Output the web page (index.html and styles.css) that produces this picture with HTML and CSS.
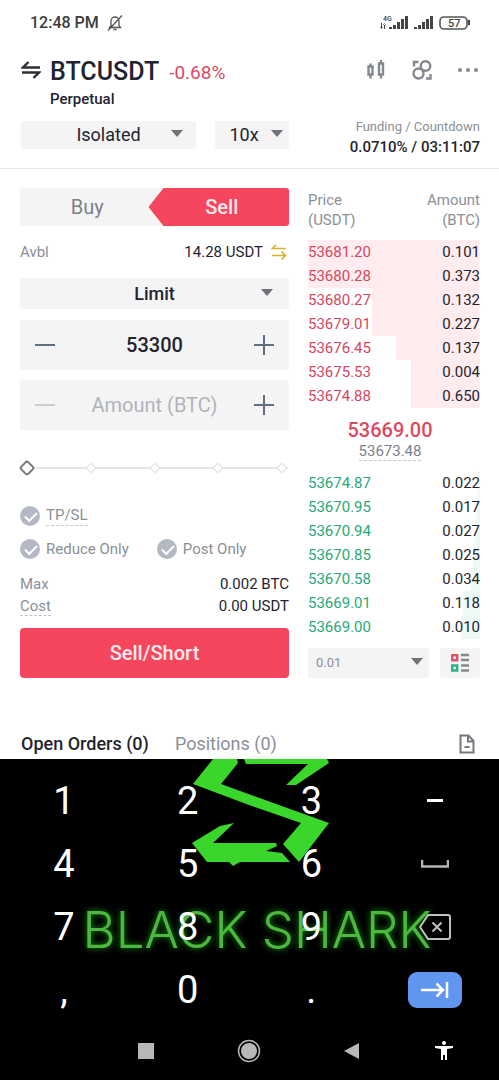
FILE: index.html
```
<!DOCTYPE html>
<html lang="en">
    <head>
        <meta charset="utf-8">
        <meta name="viewport" content="width=device-width, initial-scale=1">
        <title>BTCUSDT Perpetual</title>
        <link rel="stylesheet" href="styles.css">
    </head>

    <body>
        <div class="statusBar">
            <span class="clock">12:48 PM</span>
            <svg width="16" height="18" viewBox="0 0 16 18" fill="none" stroke="#555" stroke-width="1.3">
                <path d="M2.5 13.5h11L12 11.500V7a4 4 0 0 0-8 0v4.500zM6.500 15.500h3M15 1.500L1 16.500"/>
            </svg>
            <svg class="signals" width="90" height="18" viewBox="0 0 90 18">
                <g fill="#444">
                    <text x="3" y="7" font-size="7" font-weight="500">4G</text>
                    <path d="M1 9h1v6h-1zM0 13h3l-1.500 2zM4 9h1v6h-1zM3 11h3l-1.500-2z"/>
                    <path d="M9 13h3v2h-3zM13 11h3v4h-3zM17 8h3v7h-3zM21 5h3v10h-3zM25 2h3v13h-3z"/>
                    <path d="M34 13h3v2h-3zM38 11h3v4h-3zM42 8h3v7h-3zM46 5h3v10h-3zM50 2h3v13h-3z"/>
                    <path d="M88 6h2v5h-2z"/>
                    <text x="68" y="13" font-size="11" font-weight="500">57</text>
                </g>
                <rect x="60" y="3" width="27" height="12" rx="4" fill="none" stroke="#555" stroke-width="1.6"/>
            </svg>
        </div>

        <header>
            <div class="pair">
                <svg width="20" height="18" viewBox="0 0 20 18" fill="none" stroke="#2b2f38" stroke-width="2.400">
                    <path d="M19 6.500H2L7.500 1M1 11.500H18L12.500 17"/>
                </svg>
                <div class="pairName">
                    <h1>BTCUSDT</h1>
                    <span class="change">-0.68%</span>
                    <p>Perpetual</p>
                </div>
            </div>
            <div class="headerIcons">
                <button aria-label="Chart">
                    <svg width="20" height="20" viewBox="0 0 20 20" fill="none" stroke="#85898f" stroke-width="2.4">
                        <path d="M2.500 6.500h4v8h-4zM4.500 3.500v3M4.500 14.500v4M13 3.500h4v11h-4zM15 0v3.500M15 14.500v4"/>
                    </svg>
                </button>
                <button aria-label="Contract info">
                    <svg width="20" height="20" viewBox="0 0 20 20" fill="none" stroke="#85898f" stroke-width="2.400">
                        <circle cx="13.500" cy="6" r="4.800"/>
                        <circle cx="6.500" cy="13.500" r="5"/>
                        <path d="M2 6.500V2h4.500M18.500 14v4.500h-4.500"/>
                    </svg>
                </button>
                <button aria-label="More">
                    <svg width="20" height="20" viewBox="0 0 20 20" fill="#85898f">
                        <circle cx="2" cy="10" r="2"/><circle cx="10" cy="10" r="2"/><circle cx="18" cy="10" r="2"/>
                    </svg>
                </button>
            </div>
        </header>

        <div class="marginRow">
            <div class="selectBox marginMode">
                <select aria-label="Margin mode"><option>Isolated</option></select>
            </div>
            <div class="selectBox leverage">
                <select aria-label="Leverage"><option>10x</option></select>
            </div>
            <div class="funding">
                <span>Funding / Countdown</span>
                <strong>0.0710% / 03:11:07</strong>
            </div>
        </div>

        <main>
            <form class="orderForm" onsubmit="return false;">
                <div class="sideToggle">
                    <button type="button">Buy</button>
                    <button type="button" class="active">Sell</button>
                </div>

                <div class="available">
                    <span class="muted">Avbl</span>
                    <span>14.28 USDT</span>
                    <svg width="16" height="16" viewBox="0 0 16 16" fill="none" stroke="#d9b52c" stroke-width="1.700">
                        <path d="M15 4.500H1.500L5 1M1 11.500h13.500M10.500 7.500l4 4-4 4"/>
                    </svg>
                </div>

                <div class="selectBox orderType">
                    <select aria-label="Order type"><option>Limit</option></select>
                </div>

                <div class="stepper">
                    <button type="button" class="minus" aria-label="Decrease price"></button>
                    <input type="text" aria-label="Price" value="53300">
                    <button type="button" class="plus" aria-label="Increase price"></button>
                </div>
                <div class="stepper">
                    <button type="button" class="minus" aria-label="Decrease amount" disabled></button>
                    <input type="text" aria-label="Amount" placeholder="Amount (BTC)">
                    <button type="button" class="plus" aria-label="Increase amount"></button>
                </div>

                <div class="percent">
                    <div class="ticks"><i></i><i></i><i></i><i></i><i></i></div>
                    <input type="range" min="0" max="100" value="0" aria-label="Percent of balance">
                </div>

                <div class="options">
                    <label><input type="checkbox" checked><span class="hint">TP/SL</span></label>
                </div>
                <div class="options">
                    <label><input type="checkbox" checked>Reduce Only</label>
                    <label><input type="checkbox" checked>Post Only</label>
                </div>

                <dl>
                    <div><dt>Max</dt><dd>0.002 BTC</dd></div>
                    <div><dt><span class="hint">Cost</span></dt><dd>0.00 USDT</dd></div>
                </dl>

                <button type="submit" class="submit">Sell/Short</button>
            </form>

            <section class="book">
                <table class="asks">
                    <thead>
                        <tr><th>Price<br>(USDT)</th><th>Amount<br>(BTC)</th></tr>
                    </thead>
                    <tbody>
                        <tr style="--depth: 100%"><td>53681.20</td><td>0.101</td></tr>
                        <tr style="--depth: 100%"><td>53680.28</td><td>0.373</td></tr>
                        <tr style="--depth: 63%"><td>53680.27</td><td>0.132</td></tr>
                        <tr style="--depth: 63%"><td>53679.01</td><td>0.227</td></tr>
                        <tr style="--depth: 49%"><td>53676.45</td><td>0.137</td></tr>
                        <tr style="--depth: 40%"><td>53675.53</td><td>0.004</td></tr>
                        <tr style="--depth: 40%"><td>53674.88</td><td>0.650</td></tr>
                    </tbody>
                </table>

                <div class="lastPrice">
                    <strong>53669.00</strong>
                    <span class="hint">53673.48</span>
                </div>

                <table class="bids">
                    <tbody>
                        <tr style="--depth: 1%"><td>53674.87</td><td>0.022</td></tr>
                        <tr style="--depth: 2%"><td>53670.95</td><td>0.017</td></tr>
                        <tr style="--depth: 3%"><td>53670.94</td><td>0.027</td></tr>
                        <tr style="--depth: 4%"><td>53670.85</td><td>0.025</td></tr>
                        <tr style="--depth: 5%"><td>53670.58</td><td>0.034</td></tr>
                        <tr style="--depth: 10%"><td>53669.01</td><td>0.118</td></tr>
                        <tr style="--depth: 11%"><td>53669.00</td><td>0.010</td></tr>
                    </tbody>
                </table>

                <div class="bookFooter">
                    <div class="selectBox precision">
                        <select aria-label="Price precision"><option>0.01</option></select>
                    </div>
                    <button aria-label="Book layout">
                        <svg width="20" height="20" viewBox="0 0 20 20" fill="none" stroke-width="2.400">
                            <path stroke="#e4526a" d="M2.200 2.200h5v5h-5z"/>
                            <path stroke="#2fb380" d="M2.200 12.500h5v5h-5z"/>
                            <path stroke="#85898f" d="M11 2h8M11 7h8M11 12.500h8M11 17.500h8"/>
                        </svg>
                    </button>
                </div>
            </section>
        </main>

        <nav class="tabs">
            <a href="#orders" class="current">Open Orders (0)</a>
            <a href="#positions">Positions (0)</a>
            <button aria-label="Order history">
                <svg width="16" height="20" viewBox="0 0 16 20" fill="none" stroke="#74787f" stroke-width="2">
                    <path d="M1.500 1.500h8l5 5.500v11.500h-13zM9 1.500v6h5.500M5.500 13h5"/>
                </svg>
            </button>
        </nav>

        <div class="keyboard">
            <svg class="wallpaper" viewBox="0 0 499 321" aria-hidden="true">
                <g fill="#3bd62c">
                    <path d="M213 0H237L238 4L221 25L329 64L299 103L283 85L301 64L249 46L193 25z"/>
                    <path d="M244 0H327L329 4L296 26H286L308 5H246z"/>
                    <path d="M234 64L213 84H276L277 87L266 92L282 94L290 103H240L233 107L229 103H207L192 84L220 67z"/>
                </g>
                <text class="brand" x="257" y="189" text-anchor="middle">BLACK SHARK</text>
            </svg>
            <div class="keys">
                <button>1</button>
                <button>2</button>
                <button>3</button>
                <button aria-label="Minus">
                    <svg width="16" height="4"><path fill="#fff" d="M0 0h16v3h-16z"/></svg>
                </button>
                <button>4</button>
                <button>5</button>
                <button>6</button>
                <button aria-label="Space">
                    <svg width="28" height="8" fill="none" stroke="#b5b5b5" stroke-width="2.500"><path d="M1 0v6.500h26V0"/></svg>
                </button>
                <button>7</button>
                <button>8</button>
                <button>9</button>
                <button aria-label="Backspace">
                    <svg width="32" height="26" viewBox="0 0 32 26" fill="none" stroke="#c0c0c0" stroke-width="2">
                        <path d="M9 1h20q2 0 2 2v20q0 2-2 2H9L1 13zM13.500 8.500l9 9M22.500 8.500l-9 9"/>
                    </svg>
                </button>
                <button>,</button>
                <button>0</button>
                <button>.</button>
                <button class="next" aria-label="Next">
                    <span>
                        <svg width="28" height="16" viewBox="0 0 28 16" fill="none" stroke="#fff" stroke-width="2.500">
                            <path d="M0 8h22M15.500 1.500L22 8l-6.500 6.500M26 0v16"/>
                        </svg>
                    </span>
                </button>
            </div>
            <div class="systemNav">
                <button aria-label="Recents">
                    <svg width="16" height="16"><path fill="#b8b8b8" d="M0 0h16v16h-16z"/></svg>
                </button>
                <button aria-label="Home">
                    <svg width="24" height="24">
                        <circle cx="12" cy="12" r="10.500" fill="none" stroke="#b8b8b8" stroke-width="1.500"/>
                        <circle cx="12" cy="12" r="8" fill="#b8b8b8"/>
                    </svg>
                </button>
                <button aria-label="Back">
                    <svg width="16" height="18"><path fill="#b8b8b8" d="M15 1v16L0 9z"/></svg>
                </button>
                <button aria-label="Accessibility">
                    <svg width="18" height="20" fill="#fff">
                        <circle cx="9" cy="2" r="2"/>
                        <path d="M0 5h18v2l-6 1v11h-2v-5h-2v5h-2v-11l-6-1z"/>
                    </svg>
                </button>
            </div>
        </div>
    </body>
</html>
```
FILE: styles.css
```
* {
    box-sizing: border-box;
}

body {
    margin: 0;
    font-family: Roboto, "Liberation Sans", sans-serif;
    font-size: 15px;
    line-height: 20px;
    color: #1f2430;
    background-color: #fff;
}

button,
input,
select {
    margin: 0;
    padding: 0;
    border: 0;
    font: inherit;
    color: inherit;
    background: none;
}

button {
    cursor: pointer;
}

svg {
    display: block;
}

h1,
p,
dl,
dd {
    margin: 0;
}

.muted {
    color: #8b8f98;
}

.hint {
    border-bottom: 1px dashed #c4c7cc;
}

.statusBar {
    display: flex;
    align-items: center;
    gap: 8px;
    height: 46px;
    padding: 0 29px 0 30px;
    color: #3c3c3c;
}

.clock {
    font-size: 16px;
    font-weight: 500;
}

.signals {
    margin-left: auto;
}

header {
    display: flex;
    justify-content: space-between;
    padding: 12px 21px 12px 21px;
}

.pair {
    display: flex;
    gap: 9px;
}

.pair > svg {
    margin-top: 3px;
}

.pairName {
    display: grid;
    grid-template-columns: auto auto;
    column-gap: 10px;
    row-gap: 4px;
}

h1 {
    font-size: 25px;
    font-weight: 500;
    line-height: 27px;
}

.change {
    padding-top: 3px;
    font-size: 19px;
    line-height: 24px;
    color: #dc4a62;
}

.pairName p {
    font-weight: 500;
}

.headerIcons {
    display: flex;
    align-items: flex-start;
    gap: 26px;
    padding-top: 2px;
}

.marginRow {
    display: flex;
    align-items: flex-end;
    padding: 0 19px 19px 21px;
    border-bottom: 1px solid #e8e8ea;
}

.selectBox {
    position: relative;
    border-radius: 3px;
    background-color: #f4f4f5;
}

.selectBox select {
    display: block;
    width: 100%;
    height: 100%;
    appearance: none;
    text-align: center;
    text-align-last: center;
}

/* drop-down arrow */
.selectBox::after {
    content: '';
    position: absolute;
    top: 50%;
    right: 16px;
    margin-top: -5px;
    border: 6px solid transparent;
    border-top: 7px solid #6f7379;
    border-bottom: 0;
    pointer-events: none;
}

.marginMode,
.leverage {
    height: 28px;
    font-size: 18px;
}

.marginMode {
    width: 175px;
    margin-right: 19px;
}

.marginMode::after {
    right: 13px;
}

.leverage {
    width: 74px;
}

.leverage::after {
    right: 6px;
}

.leverage select {
    padding-right: 16px;
}

.funding {
    flex: 1;
    display: flex;
    flex-direction: column;
    height: 30px;
    justify-content: flex-end;
    text-align: right;
    margin-bottom: -8px;
}

.funding span {
    font-size: 13px;
    color: #8b8f98;
}

.funding strong {
    font-weight: 500;
}

main {
    display: grid;
    grid-template-columns: minmax(0, 269fr) minmax(0, 172fr);
    gap: 19px;
    padding: 19px 19px 0 20px;
}

.orderForm {
    display: flex;
    flex-direction: column;
}

.sideToggle {
    display: flex;
    height: 38px;
    border-radius: 3px;
    font-size: 20px;
    color: #7d818a;
    background-color: #f4f4f5;
}

.sideToggle button {
    flex: 1;
}

.sideToggle .active {
    margin-left: -6px;
    padding-left: 6px;
    font-weight: 500;
    color: #ffe9ed;
    border-radius: 3px;
    background-color: #f6465d;
    clip-path: polygon(0 50%, 15px 0, 100% 0, 100% 100%, 15px 100%);
}

.available {
    display: flex;
    align-items: center;
    gap: 8px;
    height: 52px;
    padding-right: 2px;
}

.available .muted {
    margin-right: auto;
}

.orderType {
    height: 31px;
    margin-bottom: 11px;
    font-size: 18px;
    font-weight: 500;
}

.stepper {
    display: flex;
    height: 50px;
    margin-bottom: 10px;
    border-radius: 3px;
    background-color: #f4f4f5;
}

.stepper input {
    flex: 1;
    min-width: 0;
    font-size: 20px;
    font-weight: 500;
    text-align: center;
    outline: none;
}

.stepper input::placeholder {
    font-weight: 400;
    color: #b1b3bb;
}

.stepper button {
    width: 50px;
    background: linear-gradient(#5f6f80, #5f6f80) center / 20px 2px no-repeat;
}

.stepper .plus {
    background: linear-gradient(#5f6f80, #5f6f80) center / 20px 2px no-repeat,
        linear-gradient(#5f6f80, #5f6f80) center / 2px 20px no-repeat;
}

.stepper button:disabled {
    opacity: 0.3;
}

.percent {
    position: relative;
    height: 24px;
    margin: 16px 1px 24px 1px;
    background: linear-gradient(#e6e6e8, #e6e6e8) center / 100% 2px no-repeat;
}

.ticks {
    display: flex;
    align-items: center;
    justify-content: space-between;
    height: 24px;
    padding: 0 2px;
}

.ticks i {
    width: 8px;
    height: 8px;
    border: 1px solid #dedee1;
    border-radius: 2px;
    background-color: #fff;
    transform: rotate(45deg);
}

.percent input {
    position: absolute;
    inset: 0;
    width: 100%;
    height: 24px;
    appearance: none;
}

.percent input::-webkit-slider-thumb {
    appearance: none;
    width: 12px;
    height: 12px;
    border: 2px solid #73777e;
    border-radius: 3px;
    background-color: #fff;
    transform: rotate(45deg);
}

.options {
    display: flex;
    gap: 28px;
    margin-bottom: 10px;
    color: #8b8f98;
}

.options label {
    display: flex;
    align-items: center;
    gap: 6px;
    height: 23px;
}

.options input {
    position: relative;
    width: 20px;
    height: 20px;
    appearance: none;
    border-radius: 50%;
    background-color: #b4b8c2;
}

.options input:checked::after {
    content: '';
    position: absolute;
    top: 6px;
    left: 5px;
    width: 10px;
    height: 5px;
    border: solid #fff;
    border-width: 0 0 2px 2px;
    transform: rotate(-45deg);
}

dl {
    margin: 4px 0 10px;
}

dl div {
    display: flex;
    justify-content: space-between;
    height: 22px;
}

dt {
    color: #8b8f98;
}

.submit {
    height: 50px;
    border-radius: 4px;
    font-size: 20px;
    font-weight: 500;
    color: #ffe9ed;
    background-color: #f6465d;
}

table {
    width: 100%;
    border-collapse: collapse;
}

th {
    padding: 2px 0 10px;
    font-weight: 400;
    text-align: left;
    color: #8b8f98;
}

td {
    height: 24px;
    padding: 0;
}

th:last-child,
td:last-child {
    text-align: right;
}

tbody tr {
    background: linear-gradient(var(--fill), var(--fill)) right / var(--depth) 100% no-repeat;
}

.asks {
    --fill: #feecef;
}

.bids {
    --fill: #edf9f4;
}

.asks td:first-child {
    color: #d4475e;
}

.bids td:first-child {
    color: #2ba877;
}

.lastPrice {
    display: flex;
    flex-direction: column;
    align-items: center;
    padding: 10px 8px 10px 0;
    color: #7d818a;
}

.lastPrice strong {
    font-size: 20px;
    font-weight: 500;
    line-height: 24px;
    color: #dc4a62;
}

.lastPrice .hint {
    line-height: 18px;
}

.bookFooter {
    display: flex;
    gap: 11px;
    height: 30px;
    margin-top: 9px;
}

.precision {
    flex: 1;
    font-size: 13px;
    color: #8b8f98;
}

.precision::after {
    right: 6px;
}

.precision select {
    padding-left: 8px;
    text-align: left;
    text-align-last: left;
}

.bookFooter button {
    display: grid;
    place-items: center;
    width: 40px;
    border-radius: 3px;
    background-color: #f4f4f5;
}

.tabs {
    display: flex;
    align-items: flex-end;
    gap: 26px;
    height: 81px;
    padding: 0 24px 5px 21px;
    font-size: 18px;
}

.tabs a {
    color: #8b8f98;
    text-decoration: none;
}

.tabs .current {
    font-weight: 500;
    color: #1f2430;
}

.tabs button {
    margin-left: auto;
}

.keyboard {
    position: relative;
    padding-top: 10px;
    color: #fff;
    background-color: #000;
}

.wallpaper {
    position: absolute;
    top: 0;
    left: 0;
    width: 100%;
}

.brand {
    font-family: Inter, sans-serif;
    font-size: 51px;
    font-weight: 300;
    fill: #4cb83f;
    filter: drop-shadow(0 0 3px #1f9a14);
}

.keys {
    position: relative;
    display: grid;
    grid-template-columns: repeat(4, 1fr);
    grid-auto-rows: 63px;
    padding: 0 2px;
}

.keys button {
    display: grid;
    place-items: center;
    font-size: 38px;
    line-height: 40px;
}

.next span {
    display: grid;
    place-items: center;
    width: 54px;
    height: 36px;
    border-radius: 9px;
    background-color: #6095f0;
}

.systemNav {
    position: relative;
    display: grid;
    grid-template-columns: 103fr 103fr 103fr 81fr;
    height: 59px;
    padding: 0 15px 0 94px;
}

.systemNav button {
    display: grid;
    place-items: center;
}
```
